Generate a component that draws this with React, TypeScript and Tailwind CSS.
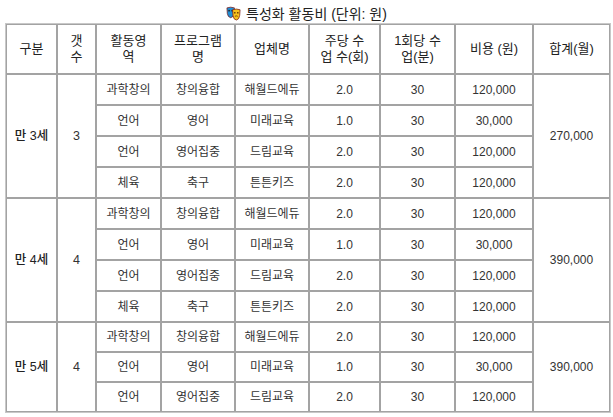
import React from 'react';

const MaskIcon = () => (
    <svg width="15" height="15" viewBox="0 0 16 16" className="inline-block align-[-2px] mr-[5px]">
        <path d="M1 2 Q5 0.5 9 2 L8.6 8 Q8 12 5 12.5 Q2 12 1.4 8 Z" fill="#1f8fd6" stroke="#7a1b1b" strokeWidth="0.8" />
        <circle cx="3.3" cy="5" r="0.9" fill="#222" />
        <circle cx="6.6" cy="5" r="0.9" fill="#222" />
        <path d="M7 4 Q11 2.5 15 4 L14.6 10 Q14 14.5 11 15 Q8 14.5 7.4 10 Z" fill="#f6c21c" stroke="#7a1b1b" strokeWidth="0.8" />
        <circle cx="9.4" cy="7.2" r="0.9" fill="#5a2a00" />
        <circle cx="12.6" cy="7.2" r="0.9" fill="#5a2a00" />
        <path d="M9.5 11 Q11 10 12.5 11" stroke="#5a2a00" strokeWidth="0.8" fill="none" />
    </svg>
);

const groups = [
    {
        age: '만 3세',
        count: '3',
        total: '270,000',
        rowClass: 'h-[31px]',
        rows: [
            ['과학창의', '창의융합', '해월드에듀', '2.0', '30', '120,000'],
            ['언어', '영어', '미래교육', '1.0', '30', '30,000'],
            ['언어', '영어집중', '드림교육', '2.0', '30', '120,000'],
            ['체육', '축구', '튼튼키즈', '2.0', '30', '120,000'],
        ],
    },
    {
        age: '만 4세',
        count: '4',
        total: '390,000',
        rowClass: 'h-[31px]',
        rows: [
            ['과학창의', '창의융합', '해월드에듀', '2.0', '30', '120,000'],
            ['언어', '영어', '미래교육', '1.0', '30', '30,000'],
            ['언어', '영어집중', '드림교육', '2.0', '30', '120,000'],
            ['체육', '축구', '튼튼키즈', '2.0', '30', '120,000'],
        ],
    },
    {
        age: '만 5세',
        count: '4',
        total: '390,000',
        rowClass: 'h-[30px]',
        rows: [
            ['과학창의', '창의융합', '해월드에듀', '2.0', '30', '120,000'],
            ['언어', '영어', '미래교육', '1.0', '30', '30,000'],
            ['언어', '영어집중', '드림교육', '2.0', '30', '120,000'],
        ],
    },
];

const widths = ['w-[51px]', 'w-[39px]', 'w-[65px]', 'w-[74px]', 'w-[74px]', 'w-[71px]', 'w-[75px]', 'w-[78px]', 'w-[77px]'];

const headers = ['구분', '갯\n수', '활동영\n역', '프로그램\n명', '업체명', '주당 수\n업 수(회)', '1회당 수\n업(분)', '비용 (원)', '합계(월)'];

const cell = 'border border-[#a3a3a3] text-center align-middle p-0';

const App = () => {
    return (
        <div className="w-[613px] h-[417px] bg-white text-[#333] font-['Liberation_Sans','Noto_Sans_CJK_KR',sans-serif] overflow-hidden">
            {/* Caption */}
            <div className="h-[23px] pt-[6px] text-center text-[14px] leading-[16px] text-[#222]">
                <MaskIcon />
                특성화 활동비 (단위: 원)
            </div>

            {/* Table */}
            <table className="ml-[5px] w-[604px] table-fixed border-separate border-spacing-0 border border-[#c8c8c8]">
                <colgroup>
                    {widths.map((w, i) => (
                        <col key={i} className={w} />
                    ))}
                </colgroup>
                <thead>
                    <tr className="h-[50px]">
                        {headers.map((h, i) => (
                            <th key={i} className={`${cell} font-normal text-[13px] leading-[16px] whitespace-pre-line text-[#222]`}>
                                {h}
                            </th>
                        ))}
                    </tr>
                </thead>
                <tbody>
                    {groups.map((g, gi) =>
                        g.rows.map((r, ri) => (
                            <tr key={`${gi}-${ri}`} className={g.rowClass}>
                                {ri === 0 && (
                                    <>
                                        <td rowSpan={g.rows.length} className={`${cell} text-[12.5px] font-medium text-[#222]`}>
                                            {g.age}
                                        </td>
                                        <td rowSpan={g.rows.length} className={`${cell} text-[12.5px]`}>
                                            {g.count}
                                        </td>
                                    </>
                                )}
                                {r.map((v, vi) => (
                                    <td key={vi} className={`${cell} text-[12px] leading-[14px]`}>
                                        {v}
                                    </td>
                                ))}
                                {ri === 0 && (
                                    <td rowSpan={g.rows.length} className={`${cell} text-[12px]`}>
                                        {g.total}
                                    </td>
                                )}
                            </tr>
                        ))
                    )}
                </tbody>
            </table>
        </div>
    );
};

export default App;
